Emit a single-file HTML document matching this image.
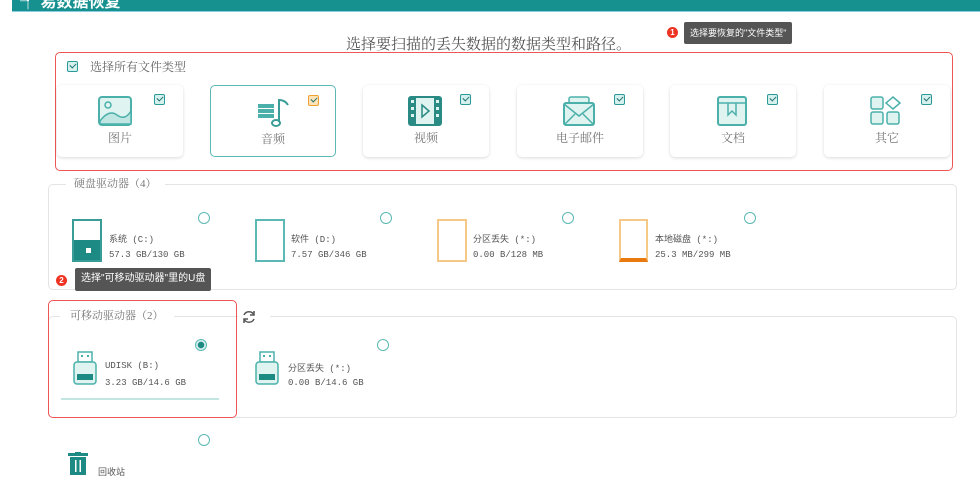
<!DOCTYPE html>
<html><head><meta charset="utf-8"><style>
*{margin:0;padding:0;box-sizing:border-box}
body{width:980px;height:477px;overflow:hidden;background:#fff;font-family:"Liberation Serif","Noto Serif CJK SC",serif;color:#666;position:relative}
.a{position:absolute}
.hdr{left:12px;top:0;width:968px;height:12px;background:#179190;border-bottom:1px solid #8cd}
.card{position:absolute;top:85px;width:126px;height:72px;background:#fff;border-radius:5px;box-shadow:0 1px 3px rgba(0,0,0,.15)}
.card .lb{position:absolute;top:44px;width:100%;text-align:center;font-size:12px;color:#777}
.cb{position:absolute;width:11px;height:11px;border:1.5px solid #2a9a96;background:#d6f0ee;border-radius:2px}
.cb:after{content:"";position:absolute;left:2px;top:1px;width:5px;height:3px;border-left:1.5px solid #1a6f6c;border-bottom:1.5px solid #1a6f6c;transform:rotate(-45deg)}
.card .cb{left:97px;top:9px}
.ic{position:absolute;left:44px;top:10px}
.radio{position:absolute;width:12px;height:12px;border:1.5px solid #5bb8b4;border-radius:50%}
.nm{font-size:9px;color:#555;font-family:"Liberation Mono","Noto Sans CJK SC",monospace}
.tip{background:#555;color:#fff;font-size:9px;font-family:"Liberation Sans","Noto Sans CJK SC",sans-serif;padding:0 6px;line-height:22px;border-radius:2px}
.dot{width:11px;height:11px;border-radius:50%;background:#e32;color:#fff;font-size:8px;text-align:center;line-height:11px;font-family:"Liberation Sans",sans-serif;font-weight:bold}
</style></head><body>
<div class="a hdr"></div>
<div class="a" style="left:20px;top:-12px;color:#fff;font-size:16px;font-weight:bold;font-family:'Liberation Sans','Noto Sans CJK SC',sans-serif">┦ 易数据恢复</div>

<div class="a" style="left:346px;top:33px;font-size:15px;color:#555">选择要扫描的丢失数据的数据类型和路径。</div>
<div class="a dot" style="left:667px;top:27px">1</div>
<div class="a tip" style="left:684px;top:22px">选择要恢复的"文件类型"</div>

<div class="a" style="left:55px;top:52px;width:898px;height:119px;border:1.5px solid #e55;border-radius:5px"></div>
<div class="cb" style="left:67px;top:61px"></div>
<div class="a" style="left:90px;top:58px;font-size:12px;color:#666">选择所有文件类型</div>

<div class="card" style="left:57px;width:126px"><svg class="ic" width="36" height="32" viewBox="0 0 36 32" style="left:40px"><rect x="2" y="2" width="32" height="28" rx="3" fill="#dff3f1" stroke="#4cb0aa" stroke-width="2"/><circle cx="11" cy="10" r="3" fill="none" stroke="#4cb0aa" stroke-width="1.5"/><path d="M3 26 Q12 14 20 20 T34 16 V29 H3Z" fill="#bfe6e2" stroke="#4cb0aa" stroke-width="1.5"/></svg><div class="cb"></div><div class="lb">图片</div></div>
<div class="card" style="left:210px;border:1.5px solid #5bb8b4;box-shadow:none"><svg class="ic" width="36" height="32" viewBox="0 0 36 32"><rect x="3" y="8" width="16" height="4" fill="#4cb0aa"/><rect x="3" y="13" width="16" height="4" fill="#4cb0aa"/><rect x="3" y="18" width="16" height="4" fill="#4cb0aa"/><path d="M24 26 V4 Q30 4 33 9" fill="none" stroke="#3a9c96" stroke-width="2"/><ellipse cx="21" cy="27" rx="4" ry="3" fill="none" stroke="#3a9c96" stroke-width="2"/></svg><div class="cb" style="border-color:#f0a030;background:#fde3b8"></div><div class="lb">音频</div></div>
<div class="card" style="left:363px"><svg class="ic" width="36" height="32" viewBox="0 0 36 32"><rect x="2" y="2" width="32" height="28" rx="2" fill="#dff3f1" stroke="#2a8a84" stroke-width="2"/><rect x="2" y="2" width="7" height="28" fill="#2a8a84"/><rect x="27" y="2" width="7" height="28" fill="#2a8a84"/><rect x="4" y="5" width="3" height="3" fill="#dff3f1"/><rect x="4" y="12" width="3" height="3" fill="#dff3f1"/><rect x="4" y="19" width="3" height="3" fill="#dff3f1"/><rect x="29" y="5" width="3" height="3" fill="#dff3f1"/><rect x="29" y="12" width="3" height="3" fill="#dff3f1"/><rect x="29" y="19" width="3" height="3" fill="#dff3f1"/><path d="M15 10 L22 16 L15 22Z" fill="none" stroke="#2a8a84" stroke-width="1.5"/></svg><div class="cb"></div><div class="lb">视频</div></div>
<div class="card" style="left:517px"><svg class="ic" width="36" height="32" viewBox="0 0 36 32"><rect x="8" y="2" width="20" height="6" rx="2" fill="#dff3f1" stroke="#4cb0aa" stroke-width="1.5"/><rect x="3" y="8" width="30" height="22" rx="2" fill="#dff3f1" stroke="#4cb0aa" stroke-width="2"/><path d="M3 9 L18 21 L33 9 M3 30 L14 19 M33 30 L22 19" fill="none" stroke="#4cb0aa" stroke-width="1.5"/></svg><div class="cb"></div><div class="lb">电子邮件</div></div>
<div class="card" style="left:670px"><svg class="ic" width="36" height="32" viewBox="0 0 36 32"><rect x="4" y="2" width="28" height="28" rx="2" fill="#dff3f1" stroke="#4cb0aa" stroke-width="2"/><path d="M4 8 H32 M14 8 V20 L18 16 L22 20 V8" fill="none" stroke="#4cb0aa" stroke-width="1.5"/></svg><div class="cb"></div><div class="lb">文档</div></div>
<div class="card" style="left:824px"><svg class="ic" width="36" height="32" viewBox="0 0 36 32"><rect x="3" y="2" width="12" height="12" rx="2" fill="#dff3f1" stroke="#4cb0aa" stroke-width="1.5"/><path d="M25 2 L32 8 L25 14 L18 8Z" fill="none" stroke="#4cb0aa" stroke-width="1.5"/><rect x="3" y="17" width="12" height="12" rx="2" fill="#dff3f1" stroke="#4cb0aa" stroke-width="1.5"/><rect x="19" y="17" width="12" height="12" rx="2" fill="#dff3f1" stroke="#4cb0aa" stroke-width="1.5"/></svg><div class="cb"></div><div class="lb">其它</div></div>

<div class="a" style="left:48px;top:184px;width:909px;height:106px;border:1px solid #e4e4e4;border-radius:5px"></div>
<div class="a" style="left:66px;top:175px;background:#fff;padding:0 8px;font-size:11px;color:#777">硬盘驱动器（4）</div>
<div class="a" style="left:72px;top:219px;width:30px;height:43px;border:2px solid #3a9c96;background:#fff"><div style="position:absolute;left:0;right:0;bottom:0;height:20px;background:#1e8a84"></div><div style="position:absolute;left:12px;bottom:7px;width:5px;height:5px;background:#fff"></div></div>
<div class="a nm" style="left:109px;top:232px">系统 (C:)</div><div class="a nm" style="left:109px;top:250px">57.3 GB/130 GB</div>
<div class="radio" style="left:198px;top:212px"></div>
<div class="a" style="left:255px;top:219px;width:30px;height:43px;border:2px solid #5bb8b4"></div>
<div class="a nm" style="left:291px;top:232px">软件 (D:)</div><div class="a nm" style="left:291px;top:250px">7.57 GB/346 GB</div>
<div class="radio" style="left:380px;top:212px"></div>
<div class="a" style="left:437px;top:219px;width:30px;height:43px;border:2px solid #f5c888"></div>
<div class="a nm" style="left:473px;top:232px">分区丢失 (*:)</div><div class="a nm" style="left:473px;top:250px">0.00  B/128 MB</div>
<div class="radio" style="left:562px;top:212px"></div>
<div class="a" style="left:619px;top:219px;width:29px;height:43px;border:2px solid #f5c888;border-bottom:4px solid #e87a10"></div>
<div class="a nm" style="left:655px;top:232px">本地磁盘 (*:)</div><div class="a nm" style="left:655px;top:250px">25.3 MB/299 MB</div>
<div class="radio" style="left:744px;top:212px"></div>

<div class="a dot" style="left:56px;top:275px">2</div>
<div class="a tip" style="left:75px;top:268px;height:23px;font-size:10px">选择"可移动驱动器"里的U盘</div>

<div class="a" style="left:48px;top:316px;width:909px;height:102px;border:1px solid #e4e4e4;border-radius:5px"></div>
<div class="a" style="left:60px;top:307px;background:#fff;padding:0 10px;font-size:11px;color:#777">可移动驱动器（2）</div>
<div class="a" style="left:238px;top:310px;width:32px;height:14px;background:#fff"></div>
<svg class="a" style="left:241px;top:309px" width="16" height="16" viewBox="0 0 16 16"><path d="M3 6 A5.5 5.5 0 0 1 13 6 M13 10 A5.5 5.5 0 0 1 3 10" fill="none" stroke="#555" stroke-width="1.5"/><path d="M13 2 V6 H9 M3 14 V10 H7" fill="none" stroke="#555" stroke-width="1.5"/></svg>
<div class="a" style="left:48px;top:300px;width:189px;height:118px;border:1.5px solid #e55;border-radius:5px"></div>
<svg class="a" style="left:72px;top:350px" width="28" height="36" viewBox="0 0 28 36"><rect x="6" y="2" width="14" height="10" fill="#fff" stroke="#4cb0aa" stroke-width="1.5"/><rect x="9" y="5" width="2" height="2" fill="#4cb0aa"/><rect x="15" y="5" width="2" height="2" fill="#4cb0aa"/><rect x="2" y="12" width="22" height="22" rx="3" fill="#dff3f1" stroke="#4cb0aa" stroke-width="1.5"/><rect x="5" y="24" width="16" height="6" fill="#1e8a84"/></svg>
<div class="a nm" style="left:105px;top:361px">UDISK (B:)</div><div class="a nm" style="left:105px;top:378px">3.23 GB/14.6 GB</div>
<div class="radio" style="left:195px;top:339px;background:radial-gradient(circle,#1e8a84 3px,#d6f0ee 3.5px)"></div>
<div class="a" style="left:61px;top:398px;width:158px;height:2px;background:#c4e6e3"></div>
<svg class="a" style="left:254px;top:350px" width="28" height="36" viewBox="0 0 28 36"><rect x="6" y="2" width="14" height="10" fill="#fff" stroke="#4cb0aa" stroke-width="1.5"/><rect x="9" y="5" width="2" height="2" fill="#4cb0aa"/><rect x="15" y="5" width="2" height="2" fill="#4cb0aa"/><rect x="2" y="12" width="22" height="22" rx="3" fill="#dff3f1" stroke="#4cb0aa" stroke-width="1.5"/><rect x="5" y="24" width="16" height="6" fill="#1e8a84"/></svg>
<div class="a nm" style="left:288px;top:361px">分区丢失 (*:)</div><div class="a nm" style="left:288px;top:378px">0.00  B/14.6 GB</div>
<div class="radio" style="left:377px;top:339px"></div>

<div class="radio" style="left:198px;top:434px"></div>
<svg class="a" style="left:68px;top:452px" width="20" height="24" viewBox="0 0 20 24"><rect x="0" y="1" width="20" height="3" fill="#1e8a84"/><rect x="7" y="0" width="6" height="2" fill="#1e8a84"/><rect x="2" y="5" width="16" height="18" fill="#1e8a84"/><rect x="7" y="8" width="1.5" height="12" fill="#fff"/><rect x="11.5" y="8" width="1.5" height="12" fill="#fff"/></svg>
<div class="a nm" style="left:98px;top:465px">回收站</div>
</body></html>
